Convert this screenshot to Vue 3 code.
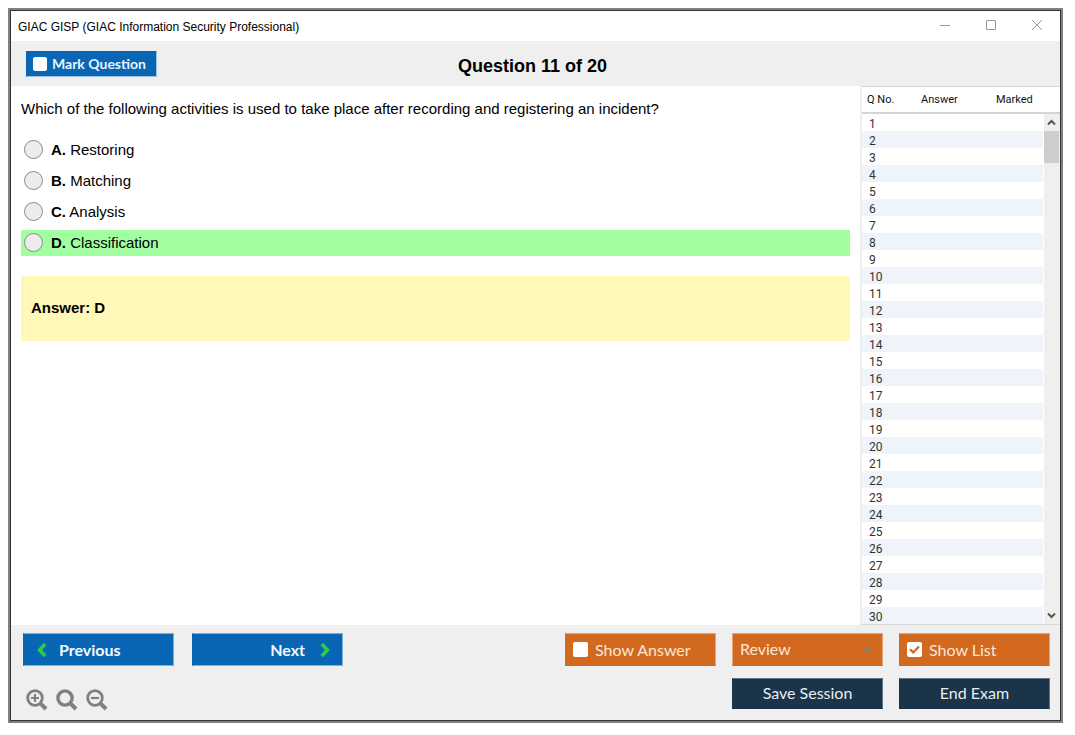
<script setup>
import { ref } from 'vue'

const options = [
  { key: 'A', text: 'Restoring' },
  { key: 'B', text: 'Matching' },
  { key: 'C', text: 'Analysis' },
  { key: 'D', text: 'Classification' },
]
const correct = 'D'
const selected = ref('')
const marked = ref(false)
const showAnswer = ref(false)
const showList = ref(true)
</script>

<template>
  <div class="window">
    <header class="titlebar">
      <span class="app-name">GIAC GISP (GIAC Information Security Professional)</span>
      <div class="window-controls">
        <button type="button" aria-label="Minimize">
          <svg width="12" height="12" viewBox="0 0 12 12"><path d="M1 5.5H11" /></svg>
        </button>
        <button type="button" aria-label="Maximize">
          <svg width="12" height="12" viewBox="0 0 12 12"><path d="M1.5 0.5H10.5V9.5H1.5Z" /></svg>
        </button>
        <button type="button" aria-label="Close">
          <svg width="12" height="12" viewBox="0 0 12 12"><path d="M1 0L11 10M11 0L1 10" /></svg>
        </button>
      </div>
    </header>

    <div class="heading">
      <label class="mark"><input v-model="marked" type="checkbox" class="tick">Mark Question</label>
      <h1>Question 11 of 20</h1>
    </div>

    <div class="body">
      <main class="question">
        <p id="prompt" class="prompt">Which of the following activities is used to take place after recording and registering an incident?</p>
        <div class="options" role="radiogroup" aria-labelledby="prompt">
          <label v-for="o in options" :key="o.key" class="option" :class="{ correct: o.key === correct }">
            <input v-model="selected" type="radio" name="choice" :value="o.key">
            <span><b>{{ o.key }}.</b> {{ o.text }}</span>
          </label>
        </div>
        <div class="answer">Answer: D</div>
      </main>

      <aside class="list">
        <table>
          <thead>
            <tr><th class="c-no">Q No.</th><th class="c-answer">Answer</th><th class="c-marked">Marked</th></tr>
          </thead>
          <tbody>
            <tr v-for="n in 30" :key="n"><td>{{ n }}</td><td></td><td></td></tr>
          </tbody>
        </table>
        <div class="scrollbar">
          <button type="button" aria-label="Scroll up">
            <svg width="9" height="7" viewBox="0 0 9 7"><path d="M1 5.5L4.5 2L8 5.5" /></svg>
          </button>
          <div class="thumb"></div>
          <button type="button" class="down" aria-label="Scroll down">
            <svg width="9" height="7" viewBox="0 0 9 7"><path d="M1 1.5L4.5 5L8 1.5" /></svg>
          </button>
        </div>
      </aside>
    </div>

    <footer class="footer">
      <div class="row">
        <button type="button" class="nav">
          <svg width="10" height="16" viewBox="0 0 10 16"><path d="M8.2 2L2.6 8L8.2 14" /></svg>Previous
        </button>
        <button type="button" class="nav next">
          Next<svg width="10" height="16" viewBox="0 0 10 16"><path d="M1.8 2L7.4 8L1.8 14" /></svg>
        </button>
        <span class="spacer"></span>
        <label class="toggle"><input v-model="showAnswer" type="checkbox" class="tick">Show Answer</label>
        <div class="review">
          <select aria-label="Review"><option>Review</option></select>
          <svg width="10" height="6" viewBox="0 0 10 6"><path d="M0 6L5 0L10 6Z" /></svg>
        </div>
        <label class="toggle">
          <span class="box">
            <input v-model="showList" type="checkbox" class="tick">
            <svg v-if="showList" width="11" height="9" viewBox="0 0 11 9"><path d="M1 4.2L4.2 7.4L10 1.4" /></svg>
          </span>Show List
        </label>
      </div>
      <div class="row lower">
        <div class="zoom">
          <button type="button" aria-label="Zoom in">
            <svg width="22" height="22" viewBox="0 0 22 22"><circle cx="9" cy="9" r="7.3" /><path d="M14.4 14.4L20 20" class="handle" /><path d="M5 9H13M9 5V13" class="sign" /></svg>
          </button>
          <button type="button" aria-label="Reset zoom">
            <svg width="22" height="22" viewBox="0 0 22 22"><circle cx="9" cy="9" r="7.1" class="thick" /><path d="M14.4 14.4L20 20" class="handle" /></svg>
          </button>
          <button type="button" aria-label="Zoom out">
            <svg width="22" height="22" viewBox="0 0 22 22"><circle cx="9" cy="9" r="7.3" /><path d="M14.4 14.4L20 20" class="handle" /><path d="M5 9H13" class="sign" /></svg>
          </button>
        </div>
        <span class="spacer"></span>
        <button type="button" class="dark">Save Session</button>
        <button type="button" class="dark">End Exam</button>
      </div>
    </footer>
  </div>
</template>

<style>
body { background: #fff; }
</style>

<style scoped>
* { box-sizing: border-box; }
.window {
  display: flex;
  flex-direction: column;
  min-height: calc(100vh - 24px);
  margin: 10px 14px 14px 10px;
  border: 1px solid #333;
  outline: 2px solid #808080;
  background: #fff;
  color: #000;
  font-family: "Liberation Sans", Arial, sans-serif;
  font-size: 15px;
}
button { padding: 0; border: 0; background: none; font: inherit; color: inherit; }
svg { display: block; fill: none; }

.titlebar { display: flex; align-items: center; justify-content: space-between; height: 30px; padding-left: 7px; font-size: 12px; }
.app-name { padding-top: 2px; }
.window-controls { display: flex; }
.window-controls button { display: grid; place-items: center; width: 46px; height: 28px; }
.window-controls svg { stroke: #999; }

.heading { position: relative; display: flex; align-items: center; justify-content: center; height: 45px; background: #efefef; }
.heading h1 { margin: 0; padding: 4px 6px 0 0; font-size: 18px; line-height: 22px; }
.mark {
  position: absolute; left: 15px; top: 10px;
  display: flex; align-items: center; gap: 5px;
  width: 131px; height: 26px; padding-left: 6px;
  background: #0866b5; border: 1px solid #9cc3e2; border-left-color: #0866b5; border-top-color: #0866b5;
  color: #e9f3fb; font: bold 14px/22px Lato, sans-serif;
}
.tick { appearance: none; flex: none; width: 14px; height: 14px; margin: 0; border-radius: 2px; background: #fff; }

.body { display: flex; flex: 1; }
.question { flex: 1; padding: 14px 10px 0; }
.prompt { margin: 0 0 19px; line-height: 18px; }
.options { display: flex; flex-direction: column; gap: 5px; }
.option { display: flex; align-items: center; gap: 8px; height: 26px; padding: 0 0 2px 3px; }
.option input { appearance: none; width: 19px; height: 19px; margin: 0; border: 1px solid #8a8a8a; border-radius: 50%; background: #ececec; }
.correct { background: #a1ffa1; }
.answer { margin-top: 20px; padding: 23px 10px 24px; background: #fff8b9; font-weight: bold; line-height: 18px; }

.list { display: flex; position: relative; width: 200px; border-left: 2px solid #efefef; border-bottom: 1px solid #d9d9d9; font: 12px Roboto, sans-serif; color: #333; }
table { width: 100%; border-spacing: 0; table-layout: fixed; align-self: flex-start; }
th { height: 28px; padding: 0; border-top: 1px solid #d5d5d5; border-bottom: 2px solid #d5d5d5; font-weight: normal; font-size: 11px; line-height: 16px; text-align: left; color: #111; }
.c-no { width: 59px; padding-left: 5px; }
.c-answer { width: 75px; }
td { height: 17px; padding: 3px 0 0 7px; line-height: 14px; }
tbody tr:nth-child(even) { background: #eef4f9; }
.scrollbar { position: absolute; top: 28px; right: 0; bottom: 0; display: flex; flex-direction: column; width: 17px; padding-right: 1px; border-left: 1px solid #fff; background: #efefef; }
.scrollbar button { display: grid; place-items: center; height: 17px; }
.scrollbar svg { stroke: #555; stroke-width: 2; }
.thumb { height: 32px; background: #cdcdcd; }
.down { margin-top: auto; }

.footer { padding: 8px 10px 11px 12px; background: #efefef; font: 16px Lato, sans-serif; }
.row { display: flex; align-items: center; gap: 16px; }
.spacer { flex: 1; margin-left: -16px; }
.nav { display: flex; align-items: center; gap: 12px; width: 151px; height: 33px; padding: 0 13px; border: 1px solid #7db0da; border-left-color: #0866b5; background: #0866b5; color: #f4f9fd; font-weight: bold; }
.nav svg { stroke: #2ecc40; stroke-width: 3.6; }
.next { justify-content: flex-end; gap: 15px; margin-left: 2px; padding-right: 12px; }
.toggle { display: flex; align-items: center; gap: 7px; width: 151px; height: 33px; padding: 0 0 1px 7px; border: 1px solid #e5a473; border-left-color: #d2691e; border-bottom-color: #d2691e; background: #d2691e; color: #f9e7da; }
.toggle .tick { display: block; width: 15px; height: 15px; }
.box { position: relative; }
.box svg { position: absolute; left: 2px; top: 3px; stroke: #d2691e; stroke-width: 2.2; }
.review { position: relative; width: 151px; height: 33px; }
.review select { appearance: none; width: 100%; height: 100%; padding: 0 7px 2px; border: 1px solid #e5a473; border-bottom-color: #d2691e; border-radius: 0; background: #d2691e; color: #f9e7da; font: inherit; }
.review svg { position: absolute; right: 10px; top: 13px; fill: #8b7d70; }
.lower { margin-top: 11px; height: 32px; }
.dark { width: 151px; height: 31px; padding-bottom: 2px; border: 1px solid #5f7382; border-left-color: #1b344a; border-bottom-color: #1b344a; background: #1b344a; color: #e8edf1; }
.zoom { display: flex; gap: 8px; padding: 13px 0 0 3px; }
.zoom svg { stroke: #808080; stroke-width: 2.8; }
.zoom .thick { stroke-width: 3.4; }
.zoom .handle { stroke-width: 4; }
.zoom .sign { stroke-width: 2.2; }
</style>
